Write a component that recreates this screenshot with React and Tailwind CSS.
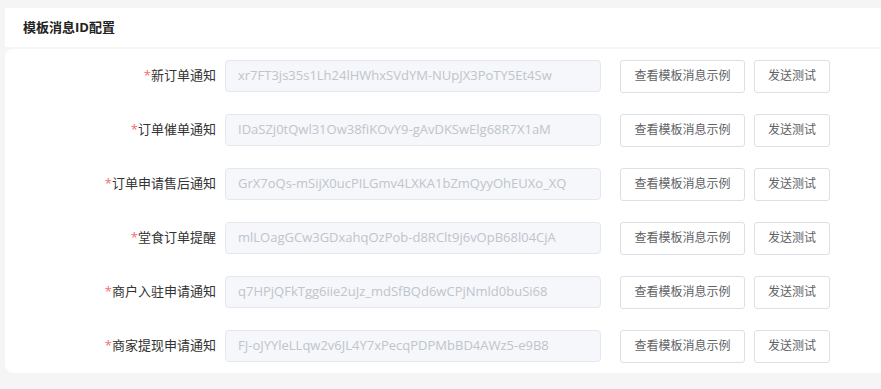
import React from 'react';

// template message config rows
const rows = [
  { label: '新订单通知', value: 'xr7FT3js35s1Lh24lHWhxSVdYM-NUpJX3PoTY5Et4Sw' },
  { label: '订单催单通知', value: 'IDaSZj0tQwl31Ow38fiKOvY9-gAvDKSwElg68R7X1aM' },
  { label: '订单申请售后通知', value: 'GrX7oQs-mSijX0ucPILGmv4LXKA1bZmQyyOhEUXo_XQ' },
  { label: '堂食订单提醒', value: 'mlLOagGCw3GDxahqOzPob-d8RClt9j6vOpB68l04CjA' },
  { label: '商户入驻申请通知', value: 'q7HPjQFkTgg6iie2uJz_mdSfBQd6wCPjNmld0buSi68' },
  { label: '商家提现申请通知', value: 'FJ-oJYYleLLqw2v6JL4Y7xPecqPDPMbBD4AWz5-e9B8' },
];

const Row = ({ label, value }) => (
  <div className="flex items-center h-[32px]">
    <div className="w-[211px] text-right text-[13px] text-[#333]">
      <span className="text-[#f56c6c]">*</span>
      {label}
    </div>
    <div className="ml-[9px] w-[376px] h-[32px] flex items-center px-[12px] bg-[#f5f7fa] border border-[#e4e7ed] rounded-[4px] text-[13px] text-[#c0c4cc] whitespace-nowrap overflow-hidden">
      {value}
    </div>
    <button className="ml-[19px] w-[125px] h-[33px] border border-[#dcdfe6] rounded-[3px] bg-white text-[12px] text-[#606266]">
      查看模板消息示例
    </button>
    <button className="ml-[9px] w-[76px] h-[33px] border border-[#dcdfe6] rounded-[3px] bg-white text-[12px] text-[#606266]">
      发送测试
    </button>
  </div>
);

export default function App() {
  return (
    <div className="w-[881px] h-[389px] bg-[#f5f5f5] pt-[8px] pl-[5px] overflow-hidden font-['Open_Sans','Noto_Sans_CJK_SC',sans-serif]">
      <div className="bg-white h-[39px] flex items-center pl-[18px] text-[13px] font-bold text-[#222]">
        模板消息ID配置
      </div>
      <div className="mt-[2px] bg-white rounded-l-[8px] py-[11px] flex flex-col gap-[22px]">
        {rows.map((r) => (
          <Row key={r.label} {...r} />
        ))}
      </div>
    </div>
  );
}
